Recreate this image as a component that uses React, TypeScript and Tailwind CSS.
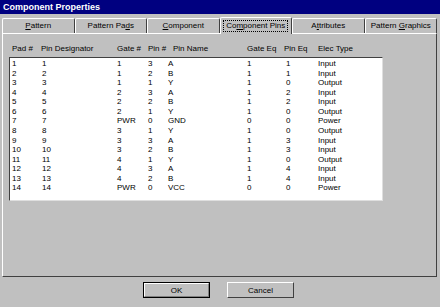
import React from 'react';

const rows = [
  ['1', '1', '1', '3', 'A', '1', '1', 'Input'],
  ['2', '2', '1', '2', 'B', '1', '1', 'Input'],
  ['3', '3', '1', '1', 'Y', '1', '0', 'Output'],
  ['4', '4', '2', '3', 'A', '1', '2', 'Input'],
  ['5', '5', '2', '2', 'B', '1', '2', 'Input'],
  ['6', '6', '2', '1', 'Y', '1', '0', 'Output'],
  ['7', '7', 'PWR', '0', 'GND', '0', '0', 'Power'],
  ['8', '8', '3', '1', 'Y', '1', '0', 'Output'],
  ['9', '9', '3', '3', 'A', '1', '3', 'Input'],
  ['10', '10', '3', '2', 'B', '1', '3', 'Input'],
  ['11', '11', '4', '1', 'Y', '1', '0', 'Output'],
  ['12', '12', '4', '3', 'A', '1', '4', 'Input'],
  ['13', '13', '4', '2', 'B', '1', '4', 'Input'],
  ['14', '14', 'PWR', '0', 'VCC', '0', '0', 'Power'],
];

const colWidths = ['w-[30px]', 'w-[75px]', 'w-[31px]', 'w-[20px]', 'w-[79px]', 'w-[39px]', 'w-[32px]', 'flex-1'];

const Tab = ({ label, u, selected }: { label: string; u: number; selected?: boolean }) => (
  <div
    className={
      selected
        ? 'relative z-10 flex-1 h-[17px] -mb-px bg-[#c0c0c0] border-t border-l border-white border-r border-r-[#404040] rounded-t-[2px] flex items-center justify-center'
        : 'flex-1 h-[15px] bg-[#c0c0c0] border-t border-l border-white border-r border-r-[#404040] rounded-t-[2px] flex items-center justify-center'
    }
  >
    <span className={selected ? 'px-[2px] outline outline-1 outline-dotted outline-black leading-[10px]' : 'leading-[10px]'}>
      {label.slice(0, u)}
      <span className="underline">{label[u]}</span>
      {label.slice(u + 1)}
    </span>
  </div>
);

export default function App() {
  return (
    <div className="w-[440px] h-[307px] bg-[#c0c0c0] text-black text-[8px] overflow-hidden" style={{ fontFamily: '"Liberation Sans", Arial, sans-serif' }}>
      <div className="h-[14px] bg-[#000080] text-white font-bold text-[9px] leading-[14px] pl-[3px]">Component Properties</div>
      <div className="px-[2px] pr-[3px] pt-[4px]">
        <div className="flex items-end h-[15px]">
          <Tab label="Pattern" u={0} />
          <Tab label="Pattern Pads" u={10} />
          <Tab label="Component" u={0} />
          <Tab label="Component Pins" u={2} selected />
          <Tab label="Attributes" u={1} />
          <Tab label="Pattern Graphics" u={8} />
        </div>
        <div className="h-[244px] border-t border-l border-white border-r border-b border-r-[#404040] border-b-[#404040] pl-[6px] pt-[10px]">
          <div className="flex h-[9px] leading-[9px] pl-[3px]">
            <div className="w-[29px]">Pad #</div>
            <div className="w-[76px]">Pin Designator</div>
            <div className="w-[31px]">Gate #</div>
            <div className="w-[25px]">Pin #</div>
            <div className="w-[74px]">Pin Name</div>
            <div className="w-[37px]">Gate Eq</div>
            <div className="w-[34px]">Pin Eq</div>
            <div>Elec Type</div>
          </div>
          <div className="mt-[4px] w-[374px] h-[144px] bg-white border-t border-l border-[#404040] border-r border-b border-r-[#dfdfdf] border-b-[#dfdfdf] pt-[1px] pl-[2px]">
            {rows.map((r, i) => (
              <div key={i} className="flex h-[9.57px] leading-[9.57px]">
                {r.map((c, j) => (
                  <div key={j} className={colWidths[j]}>{c}</div>
                ))}
              </div>
            ))}
          </div>
        </div>
        <div className="flex justify-center gap-[17px] mt-[5px] pr-[2px]">
          <button className="w-[67px] h-[16px] border border-black bg-[#c0c0c0] flex items-center justify-center">
            <span className="w-full h-full border-t border-l border-white border-r border-b border-r-[#808080] border-b-[#808080] leading-[13px]">OK</span>
          </button>
          <button className="w-[67px] h-[16px] bg-[#c0c0c0] border-t border-l border-white border-r border-b border-r-[#404040] border-b-[#404040] leading-[13px]">Cancel</button>
        </div>
      </div>
    </div>
  );
}
